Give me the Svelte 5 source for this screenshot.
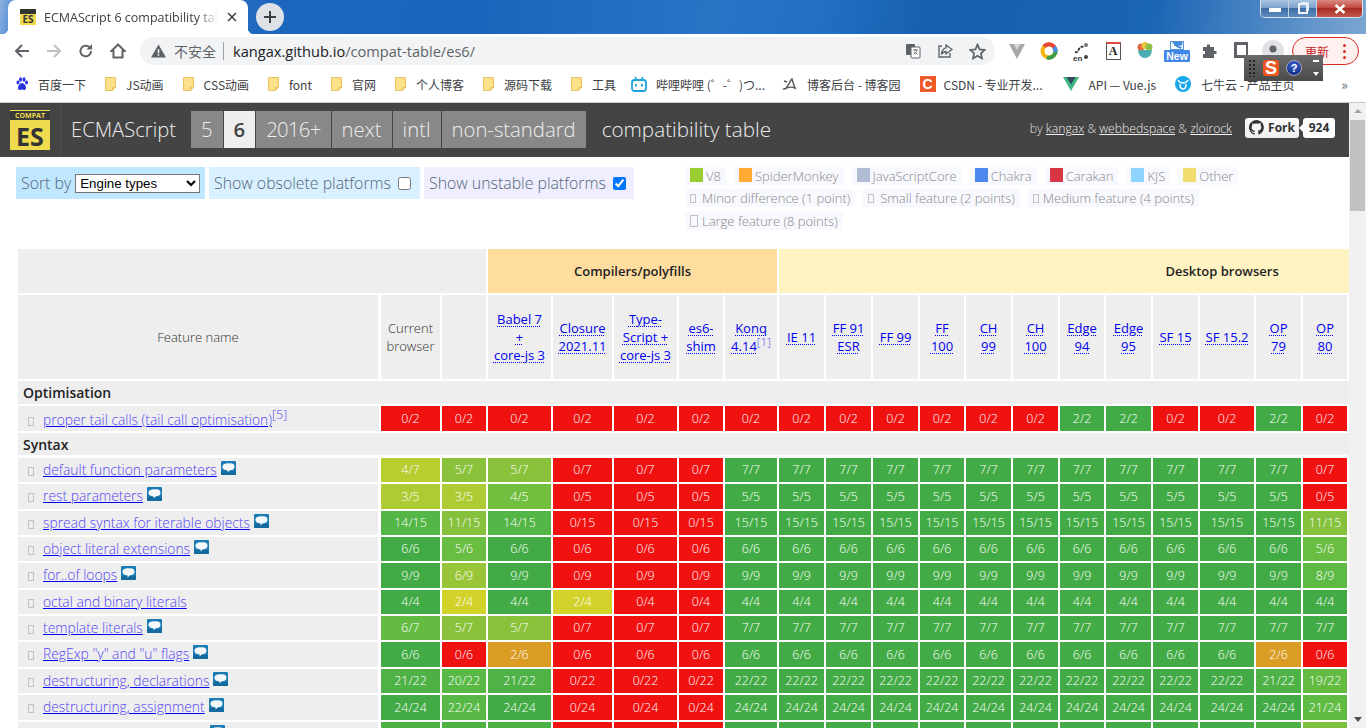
<script>
  const expand = (s) => s.split(',').flatMap((p) => {
    const [v, n] = p.split('*');
    return Array(n ? +n : 1).fill(+v);
  });
  const stops = [
    [0, [240, 17, 17]], [0.33, [218, 155, 34]], [0.5, [210, 210, 42]], [0.6, [174, 203, 51]],
    [0.71, [140, 194, 60]], [0.83, [106, 189, 64]], [0.92, [86, 184, 70]], [1, [67, 171, 69]]
  ];
  const tint = (r) => {
    for (let i = 1; i < stops.length; i++) {
      if (r <= stops[i][0]) {
        const [a, ca] = stops[i - 1];
        const [b, cb] = stops[i];
        const t = (r - a) / (b - a);
        const c = ca.map((x, k) => Math.round(x + (cb[k] - x) * t));
        return `rgb(${c.join(',')})`;
      }
    }
    return 'rgb(67,171,69)';
  };
  const row = (name, den, spec, opts = {}) => ({
    name, den, vals: expand(spec), ...opts
  });
  const optimisation = [row('proper tail calls (tail call optimisation)', 2, '0*13,2,2,0,0,2,0', { sup: '[5]', plain: true, first: true, tall: true })];
  const syntax = [
    row('default function parameters', 7, '4,5,5,0*3,7*12,0'),
    row('rest parameters', 5, '3,3,4,0*3,5*12,0', { tall: true }),
    row('spread syntax for iterable objects', 15, '14,11,14,0*3,15*12,11'),
    row('object literal extensions', 6, '6,5,6,0*3,6*12,5'),
    row('for..of loops', 9, '9,6,9,0*3,9*12,8', { tall: true }),
    row('octal and binary literals', 4, '4,2,4,2,0,0,4*13', { noIcon: true }),
    row('template literals', 7, '6,5,5,0*3,7*13'),
    row('RegExp "y" and "u" flags', 6, '6,0,2,0*3,6*11,2,0', { tall: true }),
    row('destructuring, declarations', 22, '21,20,21,0*3,22*11,21,19', { notch: true }),
    row('destructuring, assignment', 24, '24,22,24,0*3,24*12,21', { tall: true }),
    row('destructuring, parameters', 25, '24,24,24,0*3,25*11,24,19')
  ];
  const heads = [
    { l: ['Babel 7', '+', 'core-js 3'] }, { l: ['Closure', '2021.11'] }, { l: ['Type-', 'Script +', 'core-js 3'] },
    { l: ['es6-', 'shim'] }, { l: ['Konq', '4.14'], sup: '[1]' }, { l: ['IE 11'] }, { l: ['FF 91', 'ESR'] },
    { l: ['FF 99'] }, { l: ['FF', '100'] }, { l: ['CH', '99'] }, { l: ['CH', '100'] }, { l: ['Edge', '94'] },
    { l: ['Edge', '95'] }, { l: ['SF 15'] }, { l: ['SF 15.2'] }, { l: ['OP', '79'] }, { l: ['OP', '80'] }
  ];
  const widths = [361, 59, 44, 63, 59, 63, 44, 52, 45, 45, 45, 44, 45, 45, 44, 45, 45, 54, 45, 44];
  const engines = [
    ['V8', '#9acd32'], ['SpiderMonkey', '#ffaa33'], ['JavaScriptCore', '#b0bcd4'], ['Chakra', '#4d88ee'],
    ['Carakan', '#d93644'], ['KJS', '#8fd3ff'], ['Other', '#f0dd6e']
  ];
  const sizes = ['Minor difference (1 point)', 'Small feature (2 points)', 'Medium feature (4 points)', 'Large feature (8 points)'];
  const tabs = ['5', '6', '2016+', 'next', 'intl', 'non-standard'];
</script>

{#snippet folder()}
  <svg class="bm-ico folder" viewBox="0 0 11 14" width="11" height="14">
    <path d="M.5.5h10v10l-3 3H.5z" fill="#fde08a" stroke="#e9c35a" />
    <path d="M7.5 13.5v-3h3" fill="#f6d06c" stroke="#e9c35a" />
  </svg>
{/snippet}

{#snippet mdn()}
  <svg class="mdn" viewBox="0 0 15 14" width="15" height="14">
    <rect width="15" height="14" rx="1" fill="#1b7cb4" />
    <rect y="10" width="15" height="4" rx="1" fill="#136a9e" />
    <path d="M1.500 5c.6-2.400 4-3.200 6.500-2.600 2.400-.6 5.500.2 5.500 3 0 2.600-2 4-4.600 3.800L6.500 11.500 6.700 9.400C3.800 9.400.8 7.500 1.500 5z" fill="#f4f8fb" />
  </svg>
{/snippet}

{#snippet tofu()}<span class="tofu"></span>{/snippet}

{#snippet featureRow(r)}
  <tr class:tall={r.tall}>
    <td class="feat" class:plain={r.plain}>
      {@render tofu()}<a class="flink" href="#top">{r.name}</a>{#if r.sup}<sup>{r.sup}</sup>{/if}{#if !r.plain && !r.noIcon}{@render mdn()}{/if}
    </td>
    {#each r.vals as v, i}
      <td class="score" class:notch={r.notch && i === 0} style="background-color:{tint(v / r.den)}">{v}/{r.den}</td>
    {/each}
  </tr>
{/snippet}

<div class="window">
  <header class="tabstrip">
    <div class="tab">
      <span class="fav"><span class="fav-band"></span><b>ES</b></span>
      <span class="tab-title">ECMAScript 6 compatibility table</span>
      <svg class="tab-x" viewBox="0 0 10 10" width="10" height="10"><path d="M1 1l8 8M9 1l-8 8" stroke="#444" stroke-width="1.600" /></svg>
    </div>
    <div class="newtab">
      <svg viewBox="0 0 14 14" width="14" height="14"><path d="M7 1v12M1 7h12" stroke="#3c4043" stroke-width="2" /></svg>
    </div>
  </header>

  <div class="winctl">
    <span class="wb"><i class="w-min"></i></span>
    <span class="wb"><i class="w-max"></i></span>
    <span class="wb wclose">
      <svg viewBox="0 0 12 10" width="12" height="10"><path d="M1.500 1l9 8M10.500 1l-9 8" stroke="#fff" stroke-width="2.400" /></svg>
    </span>
  </div>

  <nav class="toolbar">
    <span class="tb-btn"><svg viewBox="0 0 16 16" width="16" height="16"><path d="M15 8H2M8 2L2 8l6 6" fill="none" stroke="#5f6368" stroke-width="2" /></svg></span>
    <span class="tb-btn"><svg viewBox="0 0 16 16" width="16" height="16"><path d="M1 8h13M8 2l6 6-6 6" fill="none" stroke="#bdc1c6" stroke-width="2" /></svg></span>
    <span class="tb-btn"><svg viewBox="0 0 16 16" width="16" height="16"><path d="M13 8a5.300 5.300 0 1 1-1.600-3.800" fill="none" stroke="#5f6368" stroke-width="2" /><path d="M14 1v5.500H8.500z" fill="#5f6368" /></svg></span>
    <span class="tb-btn"><svg viewBox="0 0 16 16" width="16" height="16"><path d="M8 1.500L1.500 8H3.500v6.500h9V8h2z" fill="none" stroke="#5f6368" stroke-width="2" /></svg></span>
    <div class="omnibox">
      <svg class="warn" viewBox="0 0 16 14" width="15" height="14"><path d="M8 0l8 14H0z" fill="#5f6368" /><path d="M7.200 5h1.600v4.500H7.200zM7.200 10.500h1.600V12H7.200z" fill="#fff" /></svg>
      <span class="insecure">不安全</span>
      <span class="sep"></span>
      <span class="url"><span class="host">kangax.github.io</span>/compat-table/es6/</span>
      <span class="omni-end">
        <svg viewBox="0 0 16 16" width="16" height="16"><rect x="1" y="1" width="9" height="11" rx="1" fill="#5f6368" /><rect x="6" y="4" width="9" height="11" rx="1" fill="#fff" stroke="#5f6368" /><path d="M8 7h5M10.500 6v1M12 7c-.5 2-2 3.500-3.500 4M9 8.500c.7 1 2 2 3.500 2.500" fill="none" stroke="#5f6368" stroke-width=".9" /></svg>
        <svg viewBox="0 0 16 16" width="16" height="16"><path d="M5 3H2v11h11v-4" fill="none" stroke="#5f6368" stroke-width="1.400" /><path d="M9 2l6 4.500L9 11V8.500C7 8.500 5.500 9.500 4.500 11.500 4.500 8 6.500 5 9 4.800z" fill="none" stroke="#5f6368" stroke-width="1.300" /></svg>
        <svg viewBox="0 0 16 16" width="17" height="17"><path d="M8 1.500l2 4.500 4.800.5-3.600 3.200 1 4.800L8 12l-4.200 2.500 1-4.800L1.200 6.500 6 6z" fill="none" stroke="#5f6368" stroke-width="1.600" /></svg>
      </span>
    </div>
    <div class="exts">
      <span class="ext"><svg viewBox="0 0 18 18" width="18" height="18"><path d="M1 2h16L9 17z" fill="#a8a8a8" /><path d="M6 2h6L9 8z" fill="#dcdcdc" /></svg></span>
      <span class="ext"><svg viewBox="0 0 18 18" width="18" height="18"><circle cx="9" cy="9" r="6.500" fill="none" stroke="#f6b40e" stroke-width="4" /><path d="M4 4.500A6.500 6.500 0 0 1 15 6.500" fill="none" stroke="#e8453c" stroke-width="4" /><path d="M15.200 7A6.500 6.500 0 0 1 7 15.300" fill="none" stroke="#3b9b4a" stroke-width="4" /><path d="M14 5A6.500 6.500 0 0 1 15.300 10" fill="none" stroke="#4a8ef0" stroke-width="4" /></svg></span>
      <span class="ext en"><svg viewBox="0 0 18 18" width="18" height="18"><path d="M3 10c2 1 3-1 4-3s3-3 5-2" fill="none" stroke="#333" stroke-width="1.800" stroke-dasharray="3 1" /><circle cx="14" cy="3" r="2" fill="#777" /><circle cx="14" cy="15" r="2" fill="#444" /></svg><em>en</em></span>
      <span class="ext"><span class="a-ico">A</span></span>
      <span class="ext"><svg viewBox="0 0 18 20" width="18" height="20"><path d="M2 9a7 8 0 0 0 14 0z" fill="#49aeb4" /><circle cx="5" cy="6" r="3.500" fill="#e2693f" /><circle cx="9" cy="4.500" r="3.500" fill="#e7c53c" /><circle cx="13" cy="6" r="3.500" fill="#8fc04a" /></svg></span>
      <span class="ext newx"><svg viewBox="0 0 16 10" width="14" height="9"><rect x=".5" y=".5" width="15" height="9" fill="#fff" stroke="#3f87d8" /><path d="M3 2h10v2H5l8 4" fill="none" stroke="#3f87d8" stroke-width="2" /></svg><b>New</b></span>
      <span class="ext"><svg viewBox="0 0 16 16" width="16" height="16"><path d="M6 1.500h3V4h4v4h2.500v3H13v4H2v-4h2V8H2V4h4z" fill="#5f6368" /></svg></span>
      <span class="ext"><span class="sq"></span></span>
      <span class="ext avatar"><svg viewBox="0 0 22 22" width="22" height="22"><circle cx="11" cy="11" r="11" fill="#dfe1e5" /><circle cx="11" cy="9" r="3.500" fill="#5f6368" /><path d="M4.500 18c1-4 12-4 13 0a10 10 0 0 1-13 0z" fill="#5f6368" /></svg></span>
    </div>
    <div class="update"><span>更新</span><span class="dots"><i></i><i></i><i></i></span></div>
  </nav>

  <div class="bookmarks">
    <span class="bm"><svg class="bm-ico" viewBox="0 0 14 14" width="14" height="14"><g fill="#2932e1"><ellipse cx="3" cy="5.500" rx="1.500" ry="2" /><ellipse cx="5.500" cy="2.500" rx="1.500" ry="2.200" /><ellipse cx="9" cy="2.500" rx="1.500" ry="2.200" /><ellipse cx="11.500" cy="5.500" rx="1.500" ry="2" /><path d="M7 6c-2.500 0-5 4-3.500 6.500 1.500 1.300 2.500 0 3.500 0s2 1.300 3.500 0C12 10 9.500 6 7 6z" /></g></svg><span class="t1">百度一下</span></span>
    <span class="bm">{@render folder()}<span>JS动画</span></span>
    <span class="bm">{@render folder()}<span>CSS动画</span></span>
    <span class="bm">{@render folder()}<span>font</span></span>
    <span class="bm">{@render folder()}<span>官网</span></span>
    <span class="bm">{@render folder()}<span>个人博客</span></span>
    <span class="bm">{@render folder()}<span>源码下载</span></span>
    <span class="bm">{@render folder()}<span>工具</span></span>
    <span class="bm bili"><svg class="bm-ico" viewBox="0 0 16 16" width="16" height="16"><path d="M4 1l2 3M12 1l-2 3" stroke="#1ba5d8" stroke-width="1.500" /><rect x="1" y="4" width="14" height="11" rx="2.500" fill="none" stroke="#1ba5d8" stroke-width="1.800" /><path d="M5 8v2.500M11 8v2.500" stroke="#1ba5d8" stroke-width="1.800" /></svg><span>哔哩哔哩 (゜-゜)つ...</span></span>
    <span class="bm blog"><svg class="bm-ico" viewBox="0 0 16 16" width="16" height="16"><path d="M3 13c3 1 6-9 8-10 1 3 2 7 3 9-4-2-7-1-11 1zM3 5l3 1" fill="none" stroke="#555" stroke-width="1.400" /></svg><span>博客后台 - 博客园</span></span>
    <span class="bm"><span class="csdn">C</span><span>CSDN - 专业开发...</span></span>
    <span class="bm vue"><svg class="bm-ico" viewBox="0 0 16 14" width="16" height="14"><path d="M0 0h16L8 14z" fill="#41b883" /><path d="M3.500 0h9L8 7.500z" fill="#35495e" /></svg><span>API — Vue.js</span></span>
    <span class="bm"><svg class="bm-ico" viewBox="0 0 16 16" width="16" height="16"><circle cx="8" cy="8" r="8" fill="#16a8e8" /><path d="M3 4c1 2 2 3 5 3s4-1 5-3M5 8c0 3 1 5 3 5s3-2 3-5" fill="none" stroke="#fff" stroke-width="1.500" /></svg><span>七牛云 - 产品主页</span></span>
    <span class="more">»</span>
  </div>

  <div class="viewport">
    <main class="page">
      <div class="sitebar">
        <div class="logo"><span class="compat">COMPAT</span><span class="es">ES</span></div>
        <h1>ECMAScript</h1>
        <ul class="tabs">
          {#each tabs as t}
            <li class:on={t === '6'}>{t}</li>
          {/each}
        </ul>
        <span class="subtitle">compatibility table</span>
        <div class="by">by <a href="#top">kangax</a> &amp; <a href="#top">webbedspace</a> &amp; <a href="#top">zloirock</a></div>
        <div class="gh">
          <span class="fork"><svg viewBox="0 0 16 16" width="15" height="15"><path fill="#333" d="M8 0a8 8 0 0 0-2.500 15.600c.4.100.5-.2.500-.4v-1.400c-2.200.5-2.700-1-2.700-1-.4-.9-.9-1.200-.9-1.200-.7-.5.100-.5.100-.5.800.100 1.200.8 1.200.8.700 1.200 1.900.9 2.300.7.100-.5.300-.9.500-1.100-1.800-.2-3.600-.9-3.600-4 0-.9.300-1.600.8-2.100-.1-.2-.4-1 .1-2.100 0 0 .7-.2 2.200.8a7.600 7.600 0 0 1 4 0c1.500-1 2.200-.8 2.200-.8.400 1.100.2 1.900.1 2.100.5.600.8 1.300.8 2.100 0 3.100-1.900 3.700-3.700 3.900.3.300.6.800.6 1.500v2.200c0 .2.100.5.600.4A8 8 0 0 0 8 0z" /></svg>Fork</span>
          <span class="count">924</span>
        </div>
      </div>

      <section class="controls">
        <div class="opts">
          <label class="opt o1">Sort by <select><option>Engine types</option></select></label>
          <label class="opt o2">Show obsolete platforms <input type="checkbox" /></label>
          <label class="opt o3">Show unstable platforms <input type="checkbox" checked /></label>
        </div>
        <div class="legend">
          {#each engines as [n, c]}
            <span class="lg"><i class="sw" style="background-color:{c}"></i>{n}</span>
          {/each}
          {#each sizes as s}
            <span class="lg lg2">{@render tofu()}{s}</span>
          {/each}
        </div>
      </section>

      <table>
        <colgroup>
          {#each widths as w}<col style="width:{w}px" />{/each}
        </colgroup>
        <thead>
          <tr class="groups">
            <th colspan="3" class="g0"></th>
            <th colspan="5" class="g1">Compilers/polyfills</th>
            <th colspan="12" class="g2">Desktop browsers</th>
          </tr>
          <tr class="names">
            <th class="plainh fname">Feature name</th>
            <th class="plainh">Current<br />browser</th>
            <th></th>
            {#each heads as h}
              <th>
                {#each h.l as line, i}{#if i}<br />{/if}<a href="#top">{line}</a>{/each}{#if h.sup}<sup>{h.sup}</sup>{/if}
              </th>
            {/each}
          </tr>
        </thead>
        <tbody>
          <tr class="section"><td colspan="20">Optimisation</td></tr>
          {#each optimisation as r}{@render featureRow(r)}{/each}
          <tr class="section s2"><td colspan="20">Syntax</td></tr>
          {#each syntax as r}{@render featureRow(r)}{/each}
        </tbody>
      </table>
    </main>
    <aside class="scrollbar">
      <i class="up"></i>
      <span class="thumb"></span>
      <i class="down"></i>
    </aside>
  </div>

  <div class="ime">
    <span class="grip"></span>
    <span class="sogou">S</span>
    <span class="help">?</span>
    <span class="ime-side"><i></i><i class="tri"></i></span>
  </div>
</div>

<style>
  :global(body) { margin: 0; background: #fff; }
  * { box-sizing: border-box; }
  .window {
    position: relative; width: 1366px; height: 728px; overflow: hidden;
    display: flex; flex-direction: column;
    font-family: "Open Sans", "Noto Sans CJK SC", sans-serif;
  }
  .tabstrip {
    height: 34px; flex: none; display: flex; align-items: flex-start; padding-left: 8px;
    background: linear-gradient(100deg, #8db1e0 0, #5d93d6 1%, #1c66bd 20%, #1a64bb 35%, #2a74c6 52%, #2270c2 60%, #175eb0 68%, #1a64b4 84%, #4f88c4 93%, #7ba6d2 100%);
  }
  .tab {
    position: relative; width: 240px; height: 34px; background: #fff; border-radius: 8px 8px 0 0;
    display: flex; align-items: center; padding-left: 12px; gap: 8px;
  }
  .tab::before, .tab::after { content: ""; position: absolute; bottom: 0; width: 6px; height: 6px; }
  .tab::before { left: -6px; background: radial-gradient(circle at 0 0, transparent 6px, #fff 6.500px); }
  .tab::after { right: -6px; background: radial-gradient(circle at 100% 0, transparent 6px, #fff 6.500px); }
  .fav { width: 16px; height: 16px; background: #f0db4f; position: relative; display: flex; align-items: flex-end; justify-content: center; }
  .fav-band { position: absolute; left: 0; right: 0; top: 0; height: 5px; background: #333; }
  .fav b { font: 700 10px/11px "Open Sans", sans-serif; color: #333; }
  .tab-title {
    width: 174px; white-space: nowrap; overflow: hidden; font-size: 12.500px; color: #3c4043;
    -webkit-mask-image: linear-gradient(90deg, #000 88%, transparent);
    mask-image: linear-gradient(90deg, #000 88%, transparent);
  }
  .tab-x { margin-left: 1px; }
  .newtab { margin: 3px 0 0 8px; width: 28px; height: 28px; border-radius: 50%; background: #dee1e6; display: flex; align-items: center; justify-content: center; }

  .winctl {
    position: absolute; top: 0; left: 1260px; width: 103px; height: 18px; display: flex;
    border: 1px solid #d8e2ee; border-top: 0; border-radius: 0 0 5px 5px; overflow: hidden;
  }
  .wb { width: 28px; display: flex; align-items: center; justify-content: center; border-right: 1px solid #c6d4e4; background: linear-gradient(#a8c4e2, #7fa3cb 45%, #3f6ea5 50%, #5e8cc0); }
  .wclose { flex: 1; border: 0; background: linear-gradient(#d98a80, #c24a40 45%, #a82a20 50%, #c25a50); }
  .w-min { width: 12px; height: 4px; background: #fff; margin-top: 3px; }
  .w-max { width: 10px; height: 11px; border: 2px solid #eef3f9; box-shadow: 2px -2px 0 -1px #dde7f1; }

  .toolbar { height: 34px; flex: none; display: flex; align-items: center; background: #fff; padding-left: 6px; }
  .tb-btn { width: 32px; height: 28px; display: flex; align-items: center; justify-content: center; }
  .omnibox {
    margin-left: 6px; width: 855px; height: 28px; border-radius: 14px; background: #f1f3f4;
    display: flex; align-items: center; padding-left: 11px; color: #5f6368;
  }
  .warn { flex: none; }
  .insecure { margin-left: 8px; font-size: 14px; font-family: "Noto Sans CJK SC", sans-serif; color: #5f6368; }
  .sep { width: 1px; height: 18px; background: #9aa0a6; margin: 0 9px 0 7px; }
  .url { font-size: 14.600px; color: #5f6368; font-family: "Open Sans", sans-serif; }
  .host { color: #202124; }
  .omni-end { margin-left: auto; display: flex; gap: 16px; align-items: center; padding-right: 9px; }
  .exts { display: flex; margin-left: 6px; }
  .ext { width: 32px; height: 28px; display: flex; align-items: center; justify-content: center; position: relative; }
  .en em { position: absolute; left: 8px; bottom: 2px; font: 700 8px "Liberation Sans", sans-serif; color: #333; }
  .a-ico { width: 15px; height: 18px; border: 1px solid #555; border-top: 2px solid #e04a3a; font: 700 12px/15px "Liberation Serif", serif; color: #222; text-align: center; }
  .newx { flex-direction: column; gap: 0; }
  .newx b { background: #3f87e8; color: #fff; font: 700 10.500px/12px "Liberation Sans", sans-serif; padding: 0 2px; border-radius: 1px; }
  .sq { width: 14px; height: 16px; border: 3px solid #5f6368; border-right-width: 2px; margin-top: -2px; }
  .update {
    margin-left: 3px; width: 67px; height: 28px; border: 1px solid #d93025; border-radius: 14px; background: #fdf0ef;
    display: flex; align-items: center; padding-left: 12px; color: #c5221f; font-size: 12px; font-family: "Noto Sans CJK SC", sans-serif;
  }
  .dots { margin-left: 14px; display: flex; flex-direction: column; gap: 3px; }
  .dots i { width: 3px; height: 3px; border-radius: 50%; background: #d93025; }

  .bookmarks {
    height: 35px; flex: none; display: flex; align-items: center; background: #fff; padding: 0 0 2px 15px; gap: 19px;
    border-bottom: 1px solid #c8c8c8; font-size: 12px; color: #3c4043; font-family: "Noto Sans CJK SC", "Open Sans", sans-serif;
    white-space: nowrap;
  }
  .bm { display: inline-flex; align-items: center; gap: 10px; }
  .bm-ico { flex: none; }
  .bm .t1 { margin-left: -1px; }
  .bili { gap: 9px; margin-left: -4px; }
  .blog { margin-left: -3px; }
  .vue { margin-left: 1px; }
  .csdn { width: 16px; height: 16px; background: #f05a28; color: #fff; font: 700 14px/16px "Liberation Sans", sans-serif; text-align: center; margin-right: -2px; }
  .more { margin-left: auto; margin-right: 18px; font-size: 14px; color: #5f6368; }

  .viewport { flex: 1; min-height: 0; display: flex; }
  .page { width: 1349px; flex: none; overflow: hidden; font-weight: 300; color: #444; }
  .sitebar { height: 54px; background: #444; color: #eee; display: flex; align-items: center; }
  .logo { width: 61px; height: 54px; flex: none; border-right: 1px solid #505050; padding: 7px 0 0 10px; display: flex; flex-direction: column; }
  .compat { width: 40px; height: 10px; background: #3a3a3a; border-top: 1px solid #f0db4f; color: #f0db4f; font: 700 7px/9px "Open Sans", sans-serif; text-align: center; }
  .es { width: 40px; height: 30px; background: #f0db4f; color: #333; font: 700 25px/33px "Open Sans", sans-serif; text-align: center; }
  h1 { margin: -2px 0 0 10px; font-size: 20.200px; font-weight: 300; width: 120px; }
  .tabs { list-style: none; margin: -1px 0 0; padding: 0; display: flex; gap: 1px; }
  .tabs li { height: 37px; line-height: 36px; padding: 0 10px; background: #888; font-size: 20.300px; color: #eee; }
  .tabs li:nth-child(3) { letter-spacing: -.7px; }
  .tabs li.on { background: #eee; color: #444; font-weight: 600; }
  .subtitle { margin: -2px 0 0 16px; font-size: 20.700px; }
  .by { margin: -3px 0 0 auto; font-size: 12.200px; color: #ddd; }
  .by a { color: #eee; }
  .gh { margin: -5px 14px 0 13px; display: flex; gap: 4px; }
  .fork, .count { height: 20px; border-radius: 3px; font: 700 12px/20px "Open Sans", sans-serif; color: #333; }
  .fork { width: 54px; background: linear-gradient(#fcfcfc, #eee); display: flex; align-items: center; justify-content: center; gap: 4px; }
  .count { width: 32px; background: #fff; text-align: center; position: relative; }
  .count::before { content: ""; position: absolute; left: -4px; top: 6px; border: 4px solid transparent; border-left: 0; border-right-color: #fff; }

  .controls { height: 90px; padding: 10px 0 0 16px; display: flex; }
  .opts { width: 669px; display: flex; gap: 4px; align-items: flex-start; flex: none; }
  .opt { height: 32px; display: flex; align-items: center; gap: 4px; padding: 0 5px; font-size: 15.850px; color: #567; white-space: nowrap; }
  .o1 { width: 189px; background: #bfe7ff; }
  .o2 { width: 211px; background: #d8f0ff; gap: 5px; }
  .o3 { width: 210px; background: #eeeeff; gap: 5px; }
  select { width: 125px; height: 19px; font: 13.300px "Liberation Sans", sans-serif; color: #000; background: #fff; padding: 0; margin: 0; }
  input { margin: 0 3px 0 2px; }
  .legend { width: 600px; display: flex; flex-wrap: wrap; gap: 4px 8px; align-content: flex-start; }
  .lg { height: 18px; display: inline-flex; align-items: center; background: #f8f8ff; padding: 0 5px; font-size: 13px; color: #888; gap: 3px; white-space: nowrap; }
  .sw { width: 13px; height: 14px; margin-top: -3px; }
  .lg2 { gap: 6px; }
  .lg2:nth-child(10) { gap: 4px; }
  .lg2:last-child { height: 19px; gap: 4px; }
  .lg2:last-child .tofu { width: 8px; height: 12px; }
  .tofu { display: inline-block; width: 6px; height: 9px; border: 1px solid #c2c2c6; flex: none; }

  table { table-layout: fixed; border-collapse: separate; border-spacing: 2px; width: 1333px; margin-left: 16px; font-size: 13px; }
  td, th { padding: 0; }
  th { background: #eee; text-align: center; }
  .groups th { height: 44px; font-size: 13px; font-weight: 600; color: #222; }
  .g1 { background: #ffdd9f; }
  .groups .g2 { background: #fff3c2; box-shadow: 2px 0 0 #fff3c2; padding-left: 318px; }
  .names th { height: 84px; line-height: 18px; font-size: 13px; font-weight: 500; }
  .names a { color: #00e; text-decoration: underline dotted 1px; text-underline-offset: 2px; }
  .names th.plainh { font-weight: 300; color: #333; }
  .names th.fname { border-right: 1px solid #fff; }
  sup { font-size: 90%; font-weight: 300; line-height: 0; color: #5546f2; }
  .section td { background: #eee; font-size: 14px; font-weight: 600; color: #222; padding-left: 5px; box-shadow: 2px 0 0 #eee; }
  .s2 td { border-bottom: 1px solid #fff; }
  tbody tr td { height: 24px; }
  tbody tr.tall td { height: 25px; }
  tbody tr.section td { height: 23px; }
  .feat { background: #eee; padding: 0 0 2px 10px; border-right: 1px solid #fff; font-size: 13.850px; white-space: nowrap; }
  .feat.plain { border-right: 0; padding: 2px 0 0 10px; }
  .feat .tofu { margin-right: 9px; vertical-align: -1px; }
  .flink { color: #5546f2; text-decoration-color: #00e; }
  .mdn { margin-left: 4px; vertical-align: 0; }
  .score { position: relative; text-align: center; color: #fff; font-size: 12.400px; font-weight: 300; line-height: 16px; overflow: hidden; }
  .notch::after { content: ""; position: absolute; right: 0; top: 0; border-style: solid; border-width: 0 15px 15px 0; border-color: transparent #4cae44 transparent transparent; }

  .scrollbar { flex: 1; background: #f1f1f1; display: flex; flex-direction: column; align-items: center; padding-top: 6px; position: relative; }
  .up { border: 4px solid transparent; border-top: 0; border-bottom: 4px solid #a3a3a3; }
  .thumb { width: 15px; height: 91px; background: #c1c1c1; margin-top: 7px; }
  .down { margin-top: auto; margin-bottom: 6px; border: 4px solid transparent; border-bottom: 0; border-top: 5px solid #505050; }

  .ime {
    position: absolute; left: 1244px; top: 55px; width: 79px; height: 26px; display: flex; align-items: center;
    background: linear-gradient(#6a6a6a, #4a4a4a); padding-left: 4px;
  }
  .grip { width: 8px; height: 18px; background-image: radial-gradient(circle, #222 1px, transparent 1.200px); background-size: 4px 4px; }
  .sogou { margin-left: 7px; width: 16px; height: 16px; border-radius: 3px; background: #f0561d; color: #fff; font: 700 18px/16px "Liberation Sans", sans-serif; text-align: center; }
  .help { margin-left: 7px; width: 16px; height: 16px; border-radius: 50%; background: radial-gradient(circle at 50% 30%, #3b63d8, #0a1f70); border: 1px solid #aab; color: #fff; font: 700 11px/14px "Liberation Sans", sans-serif; text-align: center; }
  .ime-side { margin-left: 11px; display: flex; flex-direction: column; gap: 10px; align-items: center; }
  .ime-side i { width: 6px; height: 2px; background: #fff; }
  .ime-side .tri { width: 0; height: 0; background: none; border: 3px solid transparent; border-bottom: 0; border-top: 4px solid #fff; }
</style>
